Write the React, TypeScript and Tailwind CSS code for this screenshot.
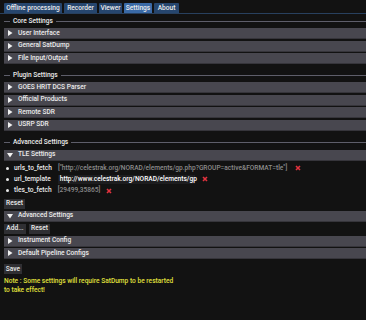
import React from "react";

const font = { fontFamily: "Roboto, 'Liberation Sans', sans-serif" };

function Tab({ label, w, active }: { label: string; w: string; active?: boolean }) {
  return (
    <div
      className={`${w} h-[10px] flex items-center justify-center rounded-t-[1px] leading-none ${
        active ? "bg-[#3a6aa6]" : "bg-[#26466e]"
      }`}
    >
      {label}
    </div>
  );
}

function SepText({ label }: { label: string }) {
  return (
    <div className="flex items-center gap-[3px] h-[8px]">
      <div className="w-[6px] h-px bg-[#5e5e6a]" />
      <span className="leading-none">{label}</span>
      <div className="flex-1 h-px bg-[#5e5e6a]" />
    </div>
  );
}

function Arrow({ open }: { open?: boolean }) {
  return open ? (
    <svg width="6" height="6" viewBox="0 0 6 6" className="shrink-0">
      <polygon points="0,1 6,1 3,5.5" fill="#f0f0f0" />
    </svg>
  ) : (
    <svg width="6" height="6" viewBox="0 0 6 6" className="shrink-0">
      <polygon points="1,0 5.5,3 1,6" fill="#f0f0f0" />
    </svg>
  );
}

function Header({ label, open }: { label: string; open?: boolean }) {
  return (
    <div className="h-[11px] bg-[#48474f] border-b border-[#36353b] flex items-center pl-[3px] gap-[5px] leading-none">
      <Arrow open={open} />
      <span>{label}</span>
    </div>
  );
}

function XIcon() {
  return (
    <svg width="6" height="6" viewBox="0 0 6 6" className="shrink-0">
      <line x1="1" y1="1" x2="5" y2="5" stroke="#e2323e" strokeWidth="1.6" />
      <line x1="5" y1="1" x2="1" y2="5" stroke="#e2323e" strokeWidth="1.6" />
    </svg>
  );
}

function Bullet() {
  return <div className="w-[3px] h-[3px] rounded-full bg-[#e8e8e8] shrink-0" />;
}

function Btn({ label, w }: { label: string; w: string }) {
  return (
    <div className={`${w} h-[10px] bg-[#2f2f33] flex items-center justify-center leading-none`}>{label}</div>
  );
}

export default function App() {
  return (
    <div
      className="w-[366px] h-[320px] bg-[#121212] overflow-hidden text-[6.6px] text-[#ececec] font-medium"
      style={font}
    >
      <div className="pt-[3px] pl-[4px] flex gap-[2px] border-b border-[#28405e]">
        <Tab label="Offline processing" w="w-[58px]" />
        <Tab label="Recorder" w="w-[33px]" />
        <Tab label="Viewer" w="w-[23px]" />
        <Tab label="Settings" w="w-[28px]" active />
        <Tab label="About" w="w-[25px]" />
      </div>
      <div className="pl-[4px] flex flex-col">
        <div className="mt-[3px]">
          <SepText label="Core Settings" />
        </div>
        <div className="mt-[3px] flex flex-col gap-[1.5px]">
          <Header label="User Interface" />
          <Header label="General SatDump" />
          <Header label="File Input/Output" />
        </div>
        <div className="mt-[7px]">
          <SepText label="Plugin Settings" />
        </div>
        <div className="mt-[3px] flex flex-col gap-[1.5px]">
          <Header label="GOES HRIT DCS Parser" />
          <Header label="Official Products" />
          <Header label="Remote SDR" />
          <Header label="USRP SDR" />
        </div>
        <div className="mt-[8px]">
          <SepText label="Advanced Settings" />
        </div>
        <div className="mt-[3px]">
          <Header label="TLE Settings" open />
        </div>
        <div className="flex flex-col pl-[2px] mt-[2px]">
          <div className="h-[11px] flex items-center gap-[5px] leading-none">
            <Bullet />
            <span>urls_to_fetch</span>
            <span className="text-[#8c8c8c] ml-[1px]">
              ["http://celestrak.org/NORAD/elements/gp.php?GROUP=active&amp;FORMAT=tle"]
            </span>
            <span className="ml-[3px]">
              <XIcon />
            </span>
          </div>
          <div className="h-[11px] flex items-center gap-[5px] leading-none">
            <Bullet />
            <span>url_template</span>
            <div className="ml-[2px] w-[137px] h-[9px] bg-[#1d1d1f] flex items-center pl-[2px] text-white">
              http://www.celestrak.org/NORAD/elements/gp
            </div>
            <span className="ml-[2px]">
              <XIcon />
            </span>
          </div>
          <div className="h-[12px] flex items-center gap-[5px] leading-none">
            <Bullet />
            <span>tles_to_fetch</span>
            <span className="text-[#8c8c8c] ml-[1px]">[29499,35865]</span>
            <span className="ml-[1px]">
              <XIcon />
            </span>
          </div>
        </div>
        <div className="mt-[2px] flex">
          <Btn label="Reset" w="w-[21px]" />
        </div>
        <div className="mt-[2px]">
          <Header label="Advanced Settings" open />
        </div>
        <div className="mt-[2px] flex gap-[3px]">
          <Btn label="Add..." w="w-[22px]" />
          <Btn label="Reset" w="w-[21px]" />
        </div>
        <div className="mt-[2px] flex flex-col gap-[1.5px]">
          <Header label="Instrument Config" />
          <Header label="Default Pipeline Configs" />
        </div>
        <div className="mt-[5px] flex">
          <Btn label="Save" w="w-[18px]" />
        </div>
        <div className="mt-[3px] text-[#e0e03c] leading-[8.5px]">
          Note : Some settings will require SatDump to be restarted
          <br />
          to take effect!
        </div>
      </div>
    </div>
  );
}
